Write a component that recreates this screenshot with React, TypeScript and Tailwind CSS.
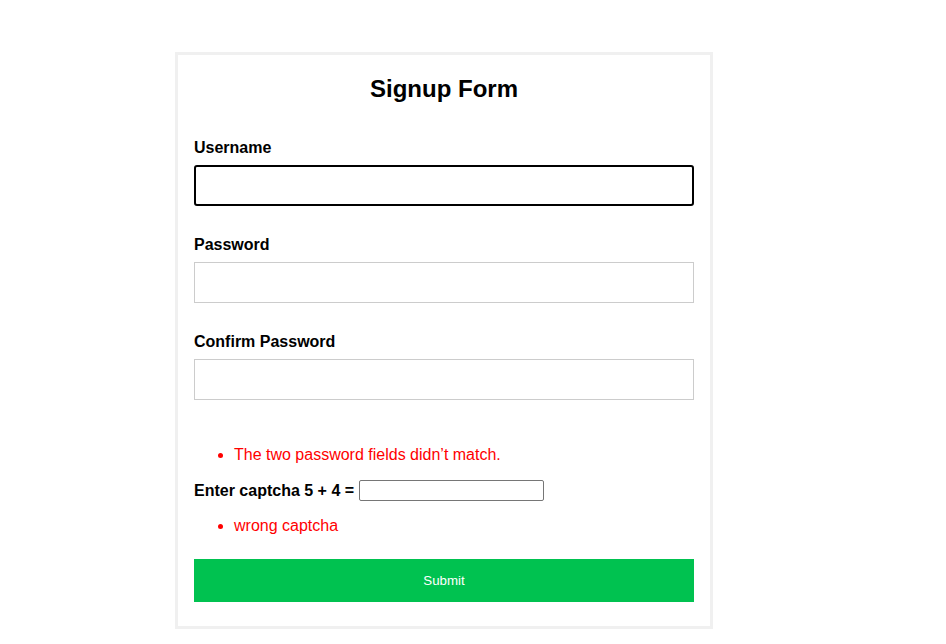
// App.tsx
export default function App() {
  const fields = [
    { id: 'username', label: 'Username', focused: true },
    { id: 'password', label: 'Password', focused: false },
    { id: 'confirm', label: 'Confirm Password', focused: false },
  ];

  return (
    <div className="min-h-screen bg-white pt-[52px] font-['Liberation_Sans',Arial,sans-serif] text-black">
      <div className="ml-[175px] flex w-[538px] flex-col border-[3px] border-[#f0f0f0] px-[16px] pt-[16px] pb-[24px]">
        <h2 className="mb-[36px] mt-[4px] text-center text-[24px] font-bold leading-[28px]">
          Signup Form
        </h2>
        {fields.map((f) => (
          <div key={f.id} className="mb-[30px]">
            <label htmlFor={f.id} className="mb-[8px] block text-[16px] font-bold leading-[18px]">
              {f.label}
            </label>
            <input
              id={f.id}
              type={f.id === 'username' ? 'text' : 'password'}
              className={
                f.focused
                  ? 'block h-[41px] w-[500px] rounded-[3px] border-2 border-black px-2 outline-none'
                  : 'block h-[41px] w-[500px] border border-[#cccccc] px-2 outline-none'
              }
            />
          </div>
        ))}
        <ul className="mt-[16px] list-disc pl-[40px] text-[16px] leading-[18px] text-[#ff0000]">
          <li>The two password fields didn’t match.</li>
        </ul>
        <div className="mt-[16px] flex items-center text-[16px] font-bold leading-[18px]">
          <span>Enter captcha 5 + 4 =</span>
          <input
            type="text"
            className="ml-[5px] h-[21px] w-[185px] rounded-[2px] border border-[#767676] px-1 outline-none"
          />
        </div>
        <ul className="mt-[16px] list-disc pl-[40px] text-[16px] leading-[18px] text-[#ff0000]">
          <li>wrong captcha</li>
        </ul>
        <button
          type="submit"
          className="mt-[24px] block h-[43px] w-[500px] bg-[#00c250] text-[13.3px] text-white"
        >
          Submit
        </button>
      </div>
    </div>
  );
}
